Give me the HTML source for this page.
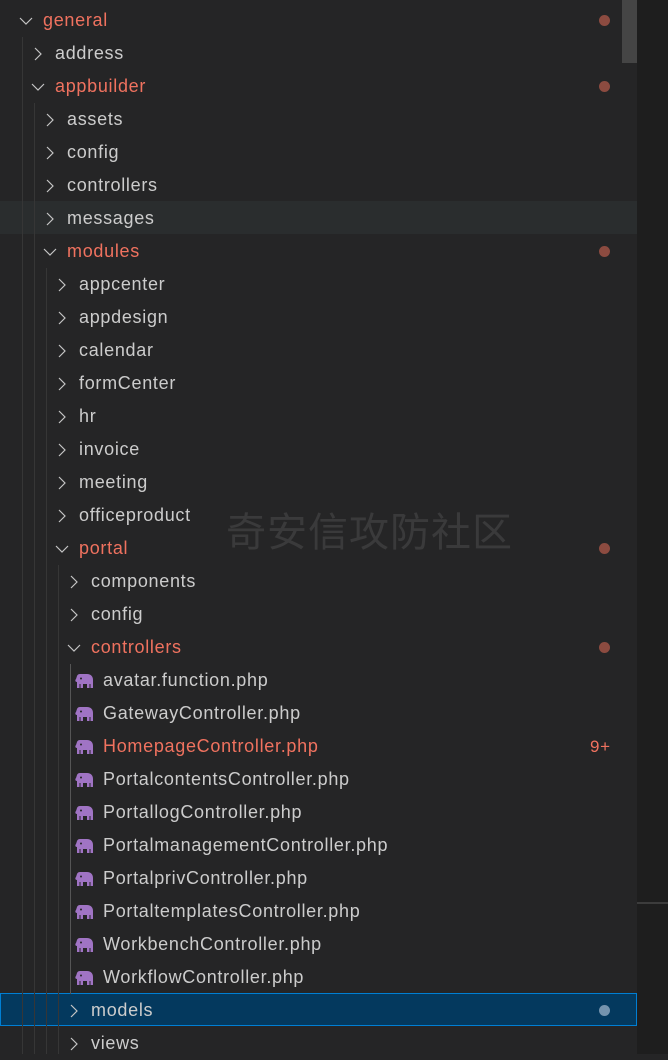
<!DOCTYPE html><html><head><meta charset="utf-8"><style>
body{margin:0;width:668px;height:1054px;background:#252526;overflow:hidden;position:relative;font-family:"Liberation Sans","DejaVu Sans",sans-serif;font-size:18px;color:#cccccc}
.right{position:absolute;left:637px;top:0;width:31px;height:1054px;background:#1e1e1e}
.hl{position:absolute;left:637px;top:902px;width:31px;height:2px;background:#3c3c3c}
.thumb{position:absolute;left:622px;top:0;width:15px;height:63px;background:#454545}
.row{position:absolute;left:0;width:637px;height:33px;line-height:33px;white-space:nowrap}
.t{position:absolute;top:0;letter-spacing:0.7px}
.m{color:#f0725f}
.dot{position:absolute;left:599px;top:11px;width:11px;height:11px;border-radius:50%;background:#8c4b40}
.g{position:absolute;width:1px;background:#363636}
svg.c{position:absolute;top:9px}
.wm{position:absolute;left:226px;top:500px;font-family:"Noto Sans CJK SC",sans-serif;font-size:40px;color:#3a3a3b;letter-spacing:1px}
</style></head><body>
<div class="right"></div><div class="hl"></div>
<div class="row" style="top:201px;background:#2a2d2e"></div>
<div class="row" style="top:993px;height:31px;background:#04395e;border:1px solid #007fd4;width:635px"></div>
<div class="g" style="left:22px;top:37px;height:1017px"></div>
<div class="g" style="left:34px;top:103px;height:951px"></div>
<div class="g" style="left:46px;top:268px;height:786px"></div>
<div class="g" style="left:58px;top:565px;height:489px"></div>
<div class="g" style="left:70px;top:664px;height:330px;background:#555"></div>
<div class="wm">奇安信攻防社区</div>
<div id="tree"></div>
<div class="thumb"></div>
<script>
var rows=[["general",0,"o",1],["address",1,"c"],["appbuilder",1,"o",1],["assets",2,"c"],["config",2,"c"],["controllers",2,"c"],["messages",2,"c"],["modules",2,"o",1],["appcenter",3,"c"],["appdesign",3,"c"],["calendar",3,"c"],["formCenter",3,"c"],["hr",3,"c"],["invoice",3,"c"],["meeting",3,"c"],["officeproduct",3,"c"],["portal",3,"o",1],["components",4,"c"],["config",4,"c"],["controllers",4,"o",1],["avatar.function.php",5,"f"],["GatewayController.php",5,"f"],["HomepageController.php",5,"f",2],["PortalcontentsController.php",5,"f"],["PortallogController.php",5,"f"],["PortalmanagementController.php",5,"f"],["PortalprivController.php",5,"f"],["PortaltemplatesController.php",5,"f"],["WorkbenchController.php",5,"f"],["WorkflowController.php",5,"f"],["models",4,"c",3],["views",4,"c"]];
var h="";
rows.forEach(function(r,i){
 var top=4+33*i,l=r[1],cx=26+12*l,tx=43+12*l,cls=(r[3]==1||r[3]==2)?"t m":"t";
 if(r[3]==3)cls="t";
 h+='<div class="row" style="top:'+top+'px">';
 if(r[2]=="o")h+='<svg class="c" width="16" height="16" style="left:'+(cx-8)+'px"><path d="M2 5l6 6 6-6" fill="none" stroke="#c5c5c5" stroke-width="1.2"/></svg>';
 else if(r[2]=="c")h+='<svg class="c" width="16" height="16" style="left:'+(cx-8)+'px"><path d="M5 2l6 6-6 6" fill="none" stroke="#c5c5c5" stroke-width="1.2"/></svg>';
 else h+='<svg class="c" width="20" height="16" style="left:75px;top:9px"><path d="M5 1h7c4 0 6 2.5 6 6v8h-2.5v-4h-1v4H12v-4H8v4H5.5v-4h-1v4H2v-6C0 9 0 7 1 6l1-3c0.5-1.3 1.5-2 3-2z" fill="#a074c4"/><circle cx="6" cy="5.5" r="1" fill="#252526"/></svg>';
 h+='<span class="'+cls+'" style="left:'+tx+'px">'+r[0]+'</span>';
 if(r[3]==1)h+='<div class="dot"></div>';
 if(r[3]==3)h+='<div class="dot" style="background:#7593ad"></div>';
 if(r[3]==2)h+='<span class="t m" style="left:590px;font-size:17px">9+</span>';
 h+='</div>';
});
document.getElementById("tree").innerHTML=h;
</script>
</body></html>
